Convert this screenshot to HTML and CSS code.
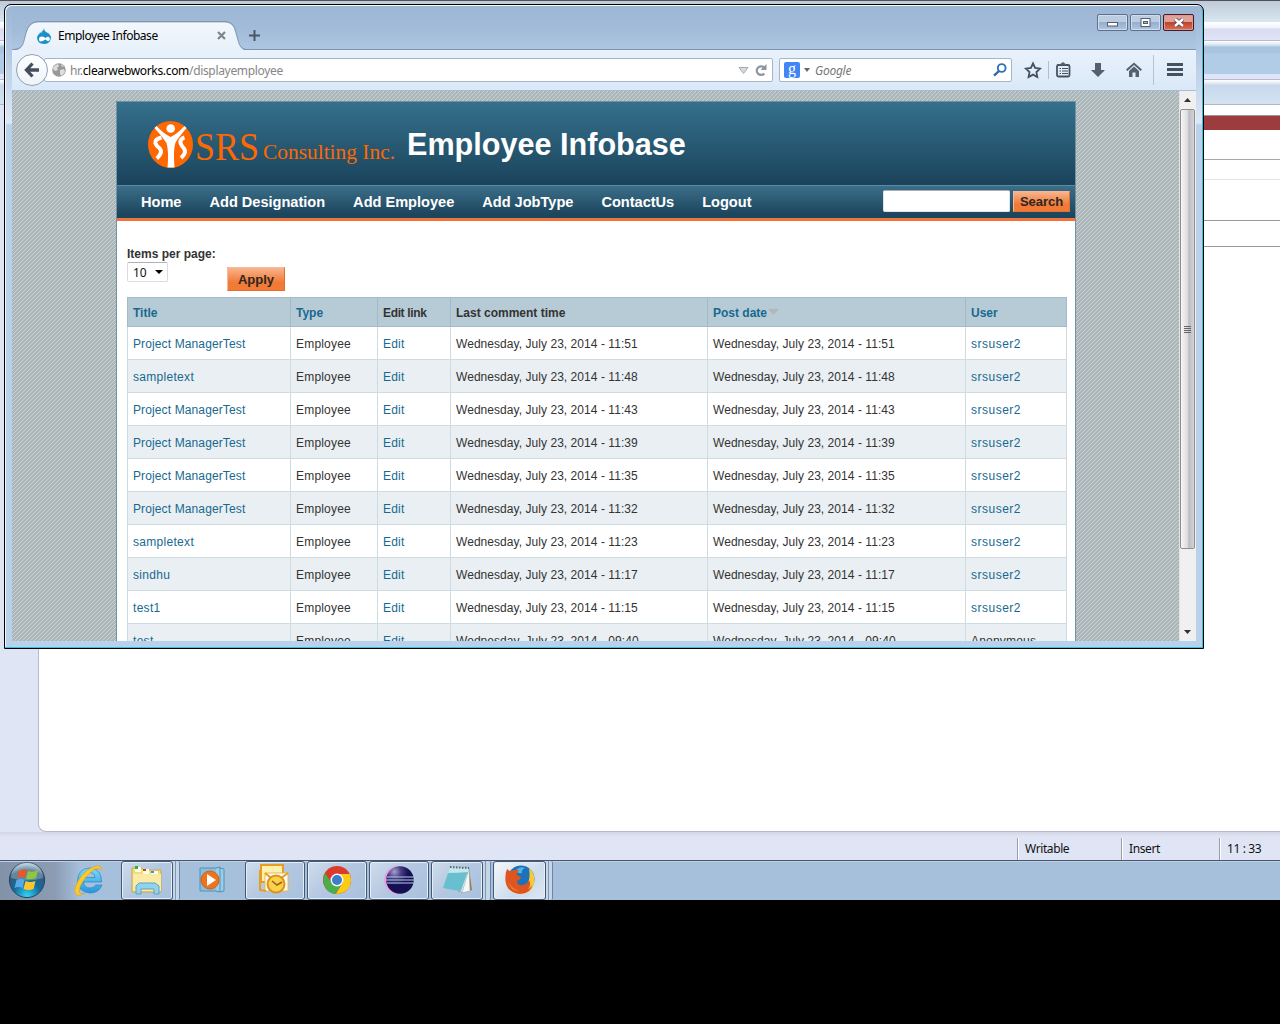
FILE: index.html
```html
<!DOCTYPE html>
<html lang="en">
<head>
<meta charset="utf-8">
<title>Employee Infobase</title>
<link rel="stylesheet" href="styles.css">
</head>
<body>
<div class="desktop">
  <div class="ide">
    <div class="ide-bars"></div>
    <div class="ide-body"><div class="ide-editor"></div></div>
    <div class="status"><span class="st s1">Writable</span><span class="st s2">Insert</span><span class="st s3">11 : 33</span></div>
  </div>
  <div class="taskbar">
    <div class="start"><svg width="40" height="38" viewBox="0 1 40 38"><defs><radialGradient id="orb" cx=".5" cy=".95" r=".9"><stop offset="0" stop-color="#35d3f3"/><stop offset=".45" stop-color="#126a9c"/><stop offset=".8" stop-color="#355a78"/><stop offset="1" stop-color="#9fc0d4"/></radialGradient></defs><circle cx="20" cy="20" r="17.6" fill="url(#orb)" stroke="#29435d"/><path d="M4 18A16 16 0 0 1 36 18Q20 23 4 18Z" fill="#fff" opacity=".25"/><path d="M12 11q4-3 8-1l-2 8q-4-2-8 0z" fill="#e8582a"/><path d="M21 11q5 2 10-1l-2 8q-5 2-10 1z" fill="#8fc73e"/><path d="M9.500 20q4-2 8 0l-2 8q-4-2-8 0z" fill="#5aa8e8"/><path d="M18.500 21q5 2 10 0l-2 8q-5 2-10 0z" fill="#fdc52c"/></svg></div>
    <div class="tb-free ie"><svg width="36" height="36" viewBox="0 0 36 36"><defs><linearGradient id="ieg" x2="0" y2="1"><stop offset="0" stop-color="#7fd8fa"/><stop offset="1" stop-color="#2497dd"/></linearGradient></defs><path d="M30.500 20H12.500q.8 6 6.500 6 4.500 0 5.600-3H31q-3 8-12 8-12-1-12.500-12.500Q7 6.500 19 6q12 1 11.500 14ZM12.700 15.500H24q-.7-5-5.500-5t-5.800 5Z" fill="url(#ieg)" stroke="#2685c4" stroke-width=".7"/><path d="M30 8q1-5-5-4Q14 7 7 19 1 31 6 33q3 1 8-2-6 2-6-2Q9 20 20 10q6-6 10-2Z" fill="#fcc92a" stroke="#d99a13" stroke-width=".5"/></svg></div>
    <div class="task narrow"><svg width="34" height="32" viewBox="0 0 34 32"><path d="M2 4h10l2 2h17v22H2z" fill="#f3dc7f" stroke="#c9a846"/><path d="M5 3h6v5H5zM13 5h6v5h-6zM21 7h7v5h-7z" fill="#fffbe5"/><path d="M5 2h3v3H5z" fill="#27b52b"/><path d="M13 5h3v2h-3z" fill="#d63a28"/><path d="M21 7h3v2h-3z" fill="#2f98dd"/><path d="M3 10h28v17H3z" fill="#f9eba6"/><path d="M6 30v-8l3-3h16l4 3v8h-5v-5H11v5z" fill="#92d2ec" stroke="#5aa3c8"/></svg></div>
    <div class="stack"></div>
    <div class="tb-free wmp"><svg width="32" height="30" viewBox="0 0 32 30"><path d="M3 3h18v23H3z" fill="#83bfdf" stroke="#4c93bd"/><path d="M19 3l4-1v25l-4-1M23 3l4 1v22l-4 1" fill="#9bcde7" stroke="#4c93bd"/><circle cx="13" cy="15" r="9" fill="#f0731c" stroke="#d95c12"/><path d="M10 9l9 6-9 6z" fill="#fff"/></svg></div>
    <div class="task wide"><svg width="36" height="34" viewBox="0 0 36 34"><path d="M4 2h22v17H4z" fill="#fff0b0" stroke="#e79d20" stroke-width="2"/><path d="M8 10h23v18H8z" fill="#fffdf6" stroke="#e8b752"/><path d="M8 10l11 9 12-9M3 7v20l6 1" fill="none" stroke="#e79d20" stroke-width="2"/><circle cx="19" cy="21" r="8.500" fill="#fbd04d" stroke="#d9951b" stroke-width="2"/><path d="M15 18l5 4 5-3" fill="none" stroke="#9b6410" stroke-width="1.600"/></svg></div>
    <div class="task wide"><svg width="30" height="30" viewBox="0 0 30 30"><circle cx="15" cy="15" r="14" fill="#db3b2b"/><path d="M2.900 8Q-1 17 5 25q4 4 9 4l6.500-11L15 20l-6-3z" fill="#4cae4a"/><path d="M15 9h12.600Q31 17 26 24q-5 5-12 5l7-12z" fill="#fbcb15"/><circle cx="15" cy="15" r="6.500" fill="#f5f8fa"/><circle cx="15" cy="15" r="5" fill="#3a7fc8"/></svg></div>
    <div class="task wide"><svg width="32" height="30" viewBox="0 0 32 30"><defs><radialGradient id="ec" cx=".3" cy=".2"><stop offset="0" stop-color="#a7a3cf"/><stop offset=".5" stop-color="#443b83"/><stop offset="1" stop-color="#151052"/></radialGradient></defs><circle cx="15" cy="15" r="14" fill="#e9a0e3"/><circle cx="17" cy="15" r="13.800" fill="url(#ec)"/><path d="M4 12h27M3 15h28M4 18h27" stroke="#b9cbec" stroke-width="1.100"/></svg></div>
    <div class="task narrow note"><svg width="34" height="32" viewBox="0 0 34 32"><path d="M29 4l3 22-6 2z" fill="#9a7b4c"/><path d="M29 4l-5 25-6-2 9-23z" fill="#e8f2f3" stroke="#93a7ac"/><path d="M29 4l1 23-8 2z" fill="#f4f8f8" stroke="#93a7ac" stroke-width=".6"/><path d="M10 3l19 1-8 23q-9-1-18-3z" fill="#68bfd0"/><path d="M10 3l19 1-1 4q-10 1-20 1z" fill="#c4e6ed"/><path d="M10 3l19 1" stroke="#58666b" stroke-width="2" stroke-dasharray="1.500 1.500"/></svg></div>
    <div class="stack last"></div>
    <div class="task narrow ff"><svg width="32" height="32" viewBox="0 0 32 32"><circle cx="17" cy="15" r="13.500" fill="#1e72b8"/><path d="M12 6q4-4 9-2-4 2-3 5-5 1-6-3Z" fill="#4ab7e6"/><path d="M25 4q6 5 5.500 13Q29 29 17 30 9 30 5 24l11 2q12-5 9-22Z" fill="#f6ca3b"/><path d="M3 5q2 2 4 2 4-2 8-1-3 3-2 5l4 2q-1 3-4 4 0 5 6 4 5-1 6-5 3 5-1 9 4-2 5-6Q27 30 16 30 3 29 1.500 17 1 9 3 5Z" fill="#df551f"/><path d="M3 10q0 13 12 17-11 0-12-17Z" fill="#f08a2d"/></svg></div>
    <div class="stack end"></div>
  </div>

  <div class="browser">
    <div class="titlebar">
      <svg class="tabshape" width="234" height="30" viewBox="0 0 234 30"><defs><linearGradient id="tg" x2="0" y2="1"><stop offset="0" stop-color="#f3f7fc"/><stop offset="1" stop-color="#e7f0fa"/></linearGradient></defs><path d="M0 29.500C11 29 10 22 13 12Q16 1.500 25 1.500H212Q221 1.500 223 12C226 22 226 29 234 29.500V30H0Z" fill="url(#tg)"/><path d="M0 28.500C11 28 10 22 13 12Q16 .5 25 .5H212Q221 .5 223 12C226 22 226 28 234 28.500" fill="none" stroke="#7e94b1"/></svg>
      <div class="tab"><svg class="drop" width="16" height="16" viewBox="0 0 16 16"><path d="M8 0Q8 3 11 4.500 15 6.500 15 10 14 16 8 16 1 15.500 1 9.500 2 5.500 5.500 4 8 2.500 8 0Z" fill="#1d91c6"/><path d="M2 7q2-4 5-3-3 1-5 3Z" fill="#7ccce9"/><path d="M3 12q-.5-3.500 3-3.500 2 0 3.500 1.500Q12 8 13.500 9.500q1 2.500-1 3.500-1 .3-3-1.500Q3.500 15 3 12Z" fill="#fff"/></svg><span class="tabtext">Employee Infobase</span><svg class="tabclose" width="9" height="9" viewBox="0 0 9 9"><path d="M1 1l7 7M8 1L1 8" stroke="#7e858d" stroke-width="2.200"/></svg></div>
      <svg class="plus" width="11" height="11" viewBox="0 0 11 11"><path d="M5.500 0v11M0 5.500h11" stroke="#4b5664" stroke-width="2"/></svg>
      <div class="winbtns"><span class="wb"><svg width="11" height="9"><rect x=".5" y="4.500" width="10" height="3.500" fill="#fff" stroke="#535d6c"/></svg></span><span class="wb"><svg width="11" height="9"><rect x="1" y=".5" width="9" height="8" fill="#fff" stroke="#535d6c"/><rect x="3.500" y="3.500" width="4" height="2" fill="#9bb4d0" stroke="#535d6c"/></svg></span><span class="wb close"><svg width="12" height="9" viewBox="0 0 12 9"><path d="M2 1l8 7M10 1L2 8" stroke="#564047" stroke-width="4"/><path d="M2 1l8 7M10 1L2 8" stroke="#fff" stroke-width="2.500"/></svg></span></div>
    </div>
    <div class="toolbar">
      <div class="back"><svg width="16" height="16" viewBox="0 0 16 16"><path d="M8.500 1.500L2.500 8l6 6.500M3 8h12" fill="none" stroke="#454e5b" stroke-width="3.300"/></svg></div>
      <div class="url"><svg class="globe" width="14" height="14" viewBox="0 0 14 14"><circle cx="7" cy="7" r="6.800" fill="#999"/><path d="M2 3l4-2 1 2-2 2 1 2-3 1-2-2zM8 7l4-1 1 3-3 4-2-2zM9 1l3 2-2 1z" fill="#ddd"/></svg><span class="urltext"><i>hr.</i>clearwebworks.com<i>/displayemployee</i></span>
        <svg class="tri" width="11" height="9" viewBox="0 0 11 9"><path d="M1 1.500h9L5.500 7.500z" fill="#d8dce1" stroke="#a4abb4"/></svg><svg class="reload" width="12" height="13" viewBox="0 0 12 13"><path d="M9.300 9.500A4.300 4.300 0 1 1 9 3.500" fill="none" stroke="#8d959e" stroke-width="2.200"/><path d="M11.500 0v6H5.500z" fill="#8d959e"/></svg></div>
      <div class="search"><span class="g">g</span><svg class="caret" width="6" height="4"><path d="M0 0h6L3 4z" fill="#666"/></svg><em>Google</em><svg class="mag" width="14" height="14" viewBox="0 0 14 14"><circle cx="8.700" cy="5" r="3.900" fill="none" stroke="#2f74b5" stroke-width="1.900"/><path d="M6 8L1 12.700" stroke="#2f68a2" stroke-width="2.400"/></svg></div>
      <svg class="tools" width="180" height="40" viewBox="0 0 180 40"><g fill="none" stroke="#47515e"><path d="M17 13.500l2.100 4.500 4.900.6-3.600 3.500.9 5-4.300-2.500-4.400 2.500.9-5-3.600-3.500 5-.6z" stroke-width="1.800"/><path d="M32.500 11v18" stroke="#aebfd2"/><rect x="41" y="15" width="12.500" height="11.500" rx="1.500" stroke-width="1.800"/><path d="M43.500 18.500h1.500M46 18.500h6M43.500 21h1.500M46 21h6M43.500 23.500h1.500M46 23.500h6" stroke-width="1.200"/></g><path d="M43 15l4-3 4 3zM79 13h6v7h4l-7 7-7-7h4z" fill="#56606d"/><path d="M118 12.500l8 7-1.400 1.500-6.600-6-6.600 6-1.400-1.500zM118 16.500l5 4.500v6h-3.500v-4.500h-3V27H113v-6z" fill="#56606d"/><path d="M137.500 5v30" stroke="#b1c3d6"/><path d="M151 14.500h16M151 19.500h16M151 24.500h16" stroke="#47515e" stroke-width="2.800"/></svg>
    </div>
    <div class="viewport">
      <div class="canvas">
        <div class="page">
          <div class="header">
            <svg class="logo" width="254" height="50" viewBox="0 0 254 50"><ellipse cx="23.500" cy="24.500" rx="22.500" ry="23.500" fill="#ff6700"/><circle cx="23.700" cy="8.500" r="4.300" fill="#fff"/><path d="M7.500 8l2-2Q17 14 23.700 17 30 14 37.500 6l2 2Q32 17 28.500 22.500 26 30 27.500 47.500h-7Q22 32 19.500 23 14 15 7.500 8Z" fill="#fff"/><path d="M14.500 17.500Q8 19 8.300 23q.7 2.500 4.500 5.500 3.500 4-3 10M37.500 17.500q-4.500 1.500-4 5.500.8 2.500 3.500 5.500 3 4-3 9.500" fill="none" stroke="#fff" stroke-width="4"/><g fill="#ff6700" font-family="Liberation Serif, serif"><text x="48" y="40" font-size="39" textLength="64" lengthAdjust="spacingAndGlyphs">SRS</text><text x="116" y="39" font-size="21.500" textLength="132" lengthAdjust="spacingAndGlyphs">Consulting Inc.</text></g></svg>
            <h1>Employee Infobase</h1>
          </div>
          <div class="nav"><span>Home</span><span>Add Designation</span><span>Add Employee</span><span>Add JobType</span><span>ContactUs</span><span>Logout</span><div class="find"><input class="field" type="text"><div class="btn go">Search</div></div></div>
          <div class="content">
            <div class="filters"><div class="per"><b>Items per page:</b><div class="select">10<svg width="8" height="4"><path d="M0 0h8L4 4z"/></svg></div></div><div class="btn apply">Apply</div></div>
            <table>
              <colgroup><col class="c1"><col class="c2"><col class="c3"><col class="c4"><col class="c5"><col class="c6"></colgroup>
              <tr><th class="a">Title</th><th class="a">Type</th><th class="el">Edit link</th><th>Last comment time</th><th class="a">Post date<svg width="11" height="6" viewBox="0 0 11 6"><path d="M0 0h11L5.500 6z" fill="#b4b6b8"/></svg></th><th class="a">User</th></tr>
              <tr><td class="a t">Project ManagerTest</td><td>Employee</td><td class="a">Edit</td><td class="d">Wednesday, July 23, 2014 - 11:51</td><td class="d">Wednesday, July 23, 2014 - 11:51</td><td class="a u">srsuser2</td></tr>
              <tr><td class="a s">sampletext</td><td>Employee</td><td class="a">Edit</td><td class="d">Wednesday, July 23, 2014 - 11:48</td><td class="d">Wednesday, July 23, 2014 - 11:48</td><td class="a u">srsuser2</td></tr>
              <tr><td class="a t">Project ManagerTest</td><td>Employee</td><td class="a">Edit</td><td class="d">Wednesday, July 23, 2014 - 11:43</td><td class="d">Wednesday, July 23, 2014 - 11:43</td><td class="a u">srsuser2</td></tr>
              <tr><td class="a t">Project ManagerTest</td><td>Employee</td><td class="a">Edit</td><td class="d">Wednesday, July 23, 2014 - 11:39</td><td class="d">Wednesday, July 23, 2014 - 11:39</td><td class="a u">srsuser2</td></tr>
              <tr><td class="a t">Project ManagerTest</td><td>Employee</td><td class="a">Edit</td><td class="d">Wednesday, July 23, 2014 - 11:35</td><td class="d">Wednesday, July 23, 2014 - 11:35</td><td class="a u">srsuser2</td></tr>
              <tr><td class="a t">Project ManagerTest</td><td>Employee</td><td class="a">Edit</td><td class="d">Wednesday, July 23, 2014 - 11:32</td><td class="d">Wednesday, July 23, 2014 - 11:32</td><td class="a u">srsuser2</td></tr>
              <tr><td class="a s">sampletext</td><td>Employee</td><td class="a">Edit</td><td class="d">Wednesday, July 23, 2014 - 11:23</td><td class="d">Wednesday, July 23, 2014 - 11:23</td><td class="a u">srsuser2</td></tr>
              <tr><td class="a s">sindhu</td><td>Employee</td><td class="a">Edit</td><td class="d">Wednesday, July 23, 2014 - 11:17</td><td class="d">Wednesday, July 23, 2014 - 11:17</td><td class="a u">srsuser2</td></tr>
              <tr><td class="a s">test1</td><td>Employee</td><td class="a">Edit</td><td class="d">Wednesday, July 23, 2014 - 11:15</td><td class="d">Wednesday, July 23, 2014 - 11:15</td><td class="a u">srsuser2</td></tr>
              <tr><td class="a s">test</td><td>Employee</td><td class="a">Edit</td><td class="d">Wednesday, July 23, 2014 - 09:40</td><td class="d">Wednesday, July 23, 2014 - 09:40</td><td>Anonymous</td></tr>
            </table>
          </div>
        </div>
      </div>
      <div class="scroll"><svg width="7" height="4"><path d="M0 4h7L3.500 0z" fill="#333"/></svg><div class="thumb"><i></i><i></i><i></i><i></i></div><svg class="dn" width="7" height="4"><path d="M0 0h7L3.500 4z" fill="#333"/></svg></div>
    </div>
  </div>
</div>
</body>
</html>
```
FILE: styles.css
```css
* { box-sizing: border-box; }
body { margin: 0; background: #000; font-family: "Liberation Sans", Arial, sans-serif; }
svg { display: block; flex: none; }
.desktop { position: relative; width: 1280px; height: 1024px; overflow: hidden; background: #000; }

/* editor window behind the browser */
.ide { height: 860px; display: flex; flex-direction: column; background: #e0e5f5; }
.ide-bars { height: 105px; flex: none; background: linear-gradient(#535158 0 1px, #bfcad8 1px, #d9e7f0 22px, #fff 22px, #eef2fa 28px, #d9dcf0 29px, #e1e4f6 40px, #b6b9d0 40px 41px, #fff 41px, #d7e5f2 45px, #a9c4de 47px 53px, #b0cce6 54px 74px, #e1e4f6 74px 79px, #b6b9d0 79px 80px, #fff 80px, #dce6f1 84px, #c8d9ec 85px, #d2e2f0 104px, #adb9c8 104px); }
.ide-body { flex: 1; padding-left: 38px; overflow: hidden; }
.ide-editor { height: 727px; border-left: 1px solid #b6bacb; border-bottom: 1px solid #b6bacb; border-bottom-left-radius: 8px; background: linear-gradient(#fff 10px, #999 10px 11px, #9c3c3e 11px 25px, #fff 25px 54px, #a6a6a6 54px 55px, #fff 55px 74px, #e4e4e4 74px 75px, #fff 75px 115px, #999 115px 116px, #fff 116px 141px, #999 141px 142px, #fff 142px); }
.status { height: 28px; display: flex; justify-content: flex-end; padding-top: 6px; font: 12px "Noto Sans", sans-serif; letter-spacing: -.4px; color: #111; background: linear-gradient(#d2d6e4, #e0e5f5 5px); }
.st { height: 22px; line-height: 22px; border-left: 1px solid #9a9ca6; box-shadow: inset 1px 0 #fff; padding-left: 7px; }
.s1 { width: 104px; } .s2 { width: 98px; } .s3 { width: 61px; }

/* taskbar */
.taskbar { height: 40px; display: flex; border-top: 1px solid #47566b; background: linear-gradient(90deg, #8292a8 0, #8b9cb3 55px, #a6bfdb 80px, #a6bfdb); box-shadow: inset 0 1px #bdd0e6; }
.start { width: 54px; padding-left: 7px; }
.tb-free { display: flex; align-items: center; justify-content: center; padding-bottom: 1px; }
.ie { width: 67px; padding-left: 3px; }
.wmp { width: 65px; padding-left: 1px; }
.task { height: 39px; display: flex; align-items: center; justify-content: center; padding-bottom: 2px; border: 1px solid #465973; border-radius: 3px; box-shadow: inset 0 0 0 1px #e4eef8; background: linear-gradient(135deg, #cfdcec, #b3c7e0 50%, #a9c1de); }
.narrow { width: 52px; }
.wide { width: 60px; margin-right: 2px; }
.stack { width: 7px; border: solid #6d86a5; border-width: 0 1px 0 0; border-radius: 2px; background: linear-gradient(90deg, #c5d6e9 0 2px, #8198b4 2px 3px, #c5d6e9 3px); }
.last { width: 8px; margin-right: 2px; }
.ff { background: linear-gradient(135deg, #f4f8fb, #ccdbeb 60%, #dce7f2); width: 53px; }

/* browser window */
.browser { position: absolute; left: 4px; top: 4px; width: 1200px; height: 645px; border: 1px solid #000; border-radius: 7px 7px 0 0; padding: 1px 7px 7px; background: linear-gradient(#9cb6d5, #a9c2df 30px, #dce8f6 118px, #b9d1ea 120px); box-shadow: inset -1px -1px #2fc3df, inset 1px 1px #f4f8fc; overflow: hidden; }
.titlebar { height: 44px; position: relative; display: flex; background: linear-gradient(#9cb6d5, #a3bcd9 60%, #adc6e1); border-bottom: 1px solid #7e94b1; }
.tabshape { position: absolute; left: 1px; top: 15px; }
.tab { position: relative; width: 232px; display: flex; align-items: center; padding: 16px 0 0 24px; }
.tabtext { margin-left: 6px; flex: 1; font: 12px "Noto Sans", sans-serif; letter-spacing: -.47px; white-space: nowrap; }
.tabclose { margin-right: 18px; }
.plus { margin: 24px 0 0 5px; }
.winbtns { margin: 8px 2px 0 auto; display: flex; gap: 2px; }
.wb { width: 31px; height: 17px; display: flex; align-items: center; justify-content: center; border: 1px solid #5c6f8c; border-radius: 2px; box-shadow: inset 0 0 0 1px #d2deec; background: linear-gradient(#bccde1 45%, #94afcd 50%, #b1c6df); }
.close { border-color: #4c1824; box-shadow: inset 0 0 0 1px #dc9b92; background: linear-gradient(#e0a198 45%, #bf4328 50%, #d2745e); }
.toolbar { height: 41px; display: flex; align-items: center; background: linear-gradient(#e9f2fc, #dae8f7); border-bottom: 1px solid #a8bdd4; font-family: "Noto Sans", sans-serif; }
.back { width: 32px; height: 32px; margin-left: 4px; z-index: 1; border: 1px solid #8fa0b5; border-radius: 50%; background: linear-gradient(#fff, #eff4fa); display: flex; align-items: center; justify-content: center; }
.url { width: 729px; height: 24px; margin-left: -4px; padding: 0 5px 0 7px; display: flex; align-items: center; background: #fff; border: 1px solid #a5b6c9; border-radius: 2px; font-size: 12px; }
.urltext { flex: 1; margin-left: 4px; letter-spacing: -.33px; }
.urltext i { font-style: normal; color: #868686; }
.reload { margin-left: 6px; }
.search { width: 233px; height: 24px; margin-left: 6px; padding: 0 4px; display: flex; align-items: center; background: #fff; border: 1px solid #a5b6c9; border-radius: 2px; }
.g { width: 16px; height: 16px; border-radius: 2px; background: #4285f4; color: #fff; font: 16px/13px "Liberation Serif", serif; text-align: center; }
.caret { margin: 0 5px 0 4px; }
.search em { flex: 1; font-size: 12px; letter-spacing: -.25px; color: #777; }
.tools { margin-left: 4px; }
.viewport { height: 550px; display: flex; overflow: hidden; }
.canvas { width: 1167px; overflow: hidden; padding: 10px 0 0 104px; background: linear-gradient(135deg, #abb6b8 43.750%, #ccd3d4 43.750% 56.250%, #abb6b8 56.250%) 0 0 / 4px 4px; }
.page { width: 960px; height: 1000px; border: 1px solid #6e93a3; background: #fff; }
.header { height: 83px; display: flex; padding: 18px 0 0 30px; background: linear-gradient(#35708c, #1b435b); }
h1 { margin: 6px 0 0 6px; font-size: 30.600px; line-height: 36px; color: #fff; }
.nav { height: 36px; border-top: 1px solid #5a8ba3; border-bottom: 3px solid #f0743a; display: flex; gap: 28px; padding: 0 5px 0 24px; line-height: 32px; font-weight: bold; font-size: 14.600px; letter-spacing: -.02px; color: #fff; background: linear-gradient(#3b6e89, #1d455d 90%); }
.find { margin-left: auto; display: flex; gap: 3px; padding-top: 4px; }
.field { width: 127px; height: 22px; border: 1px solid #dfe4e8; border-top-color: #a9aeb5; border-radius: 2px; background: #fff; }
.btn { display: flex; align-items: center; justify-content: center; border: 1px solid #e4702f; border-top-color: #f6b896; border-left-color: #f6b896; font-weight: bold; font-size: 13px; color: #2b2623; background: linear-gradient(#f7b48d, #f27a37 65%); }
.go { width: 57px; height: 21px; margin-top: 1px; }
.content { padding: 26px 10px 0; color: #333; }
.filters { display: flex; height: 50px; font-size: 12px; }
.per { width: 100px; line-height: 14px; }
.select { margin-top: 1px; width: 41px; height: 20px; display: flex; align-items: center; gap: 8px; padding-left: 5px; border: 1px solid #d9dde2; border-top-color: #adb1b8; border-radius: 2px; font: 12px "Noto Sans", sans-serif; color: #111; }
.apply { margin-top: 20px; width: 58px; height: 24px; }
table { width: 940px; table-layout: fixed; border-collapse: separate; border-spacing: 0; font-size: 12px; }
.c1 { width: 164px; } .c2 { width: 87px; } .c3 { width: 73px; } .c4 { width: 257px; } .c5 { width: 258px; } .c6 { width: 101px; }
th, td { padding: 2px 5px 0; text-align: left; white-space: nowrap; border: solid #cddce0; border-width: 0 1px 1px 0; height: 33px; letter-spacing: .19px; }
th:first-child, td:first-child { border-left-width: 1px; }
th { height: 30px; background: #b7cbd6; border-color: #a3bbc7; border-top-width: 1px; letter-spacing: 0; }
th svg { display: inline-block; margin-left: 1px; vertical-align: 2px; }
tr:nth-child(odd) td { background: #e9eff2; }
.a { color: #17698f; }
.el { letter-spacing: -.35px; }
.d { letter-spacing: .05px; }
.t { letter-spacing: .12px; }
.s { letter-spacing: .3px; }
.u { letter-spacing: .5px; }
.scroll { width: 17px; display: flex; flex-direction: column; align-items: center; padding: 7px 1px 7px 0; background: #f0f0f0; border-left: 1px solid #e3e3e3; }
.thumb { flex: none; margin-top: 7px; width: 15px; height: 440px; border: 1px solid #8f8f92; border-radius: 2px; background: linear-gradient(90deg, #f6f6f7, #dcdcde 50%, #bcbcc0 60%, #d4d4d8); display: flex; flex-direction: column; align-items: center; justify-content: center; gap: 1px; }
.thumb i { width: 7px; height: 1px; background: #666; }
.dn { margin-top: auto; }
```
